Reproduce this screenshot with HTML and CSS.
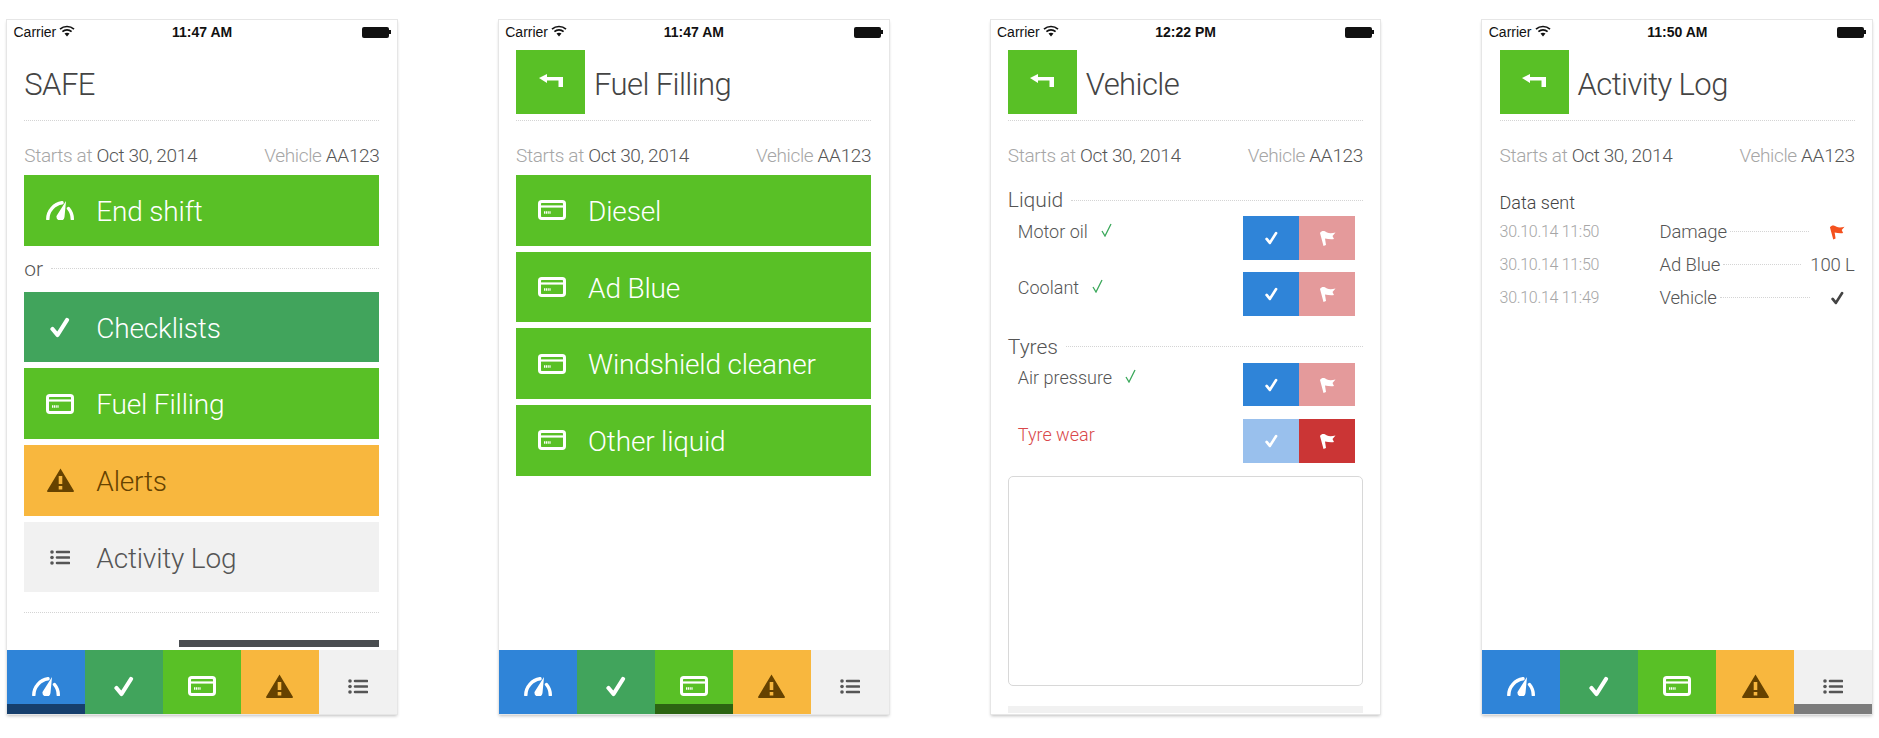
FILE: index.html
```html
<!DOCTYPE html>
<html lang="en">
<head>
    <meta charset="UTF-8">
    <title>SAFE screens</title>
    <link rel="stylesheet" href="styles.css">
</head>
<body>
    <!-- Shared icons -->
    <svg class="sprite" width="0" height="0">
        <symbol id="i-gauge" viewBox="0 0 28 19">
            <path d="M1.800 18C1.800 10 8 3 16 1.800" fill="none" stroke="currentColor" stroke-width="3.400" stroke-linecap="round"/>
            <path d="M10.500 15L20 0L18.500 16A4 4 0 0 1 10.500 15Z" fill="currentColor"/>
            <path d="M22.500 7.500C25 10.500 26.300 14 26.300 18" fill="none" stroke="currentColor" stroke-width="3.400" stroke-linecap="round"/>
        </symbol>
        <symbol id="i-check" viewBox="0 0 20 21">
            <path d="M2.500 12L7.500 18L17 3" fill="none" stroke="currentColor" stroke-width="4.200" stroke-linecap="round" stroke-linejoin="round"/>
        </symbol>
        <symbol id="i-card" viewBox="0 0 28 20">
            <rect x="1.500" y="1.500" width="25" height="17" rx="2.200" fill="none" stroke="currentColor" stroke-width="3"/>
            <path d="M1 6.500H27" stroke="currentColor" stroke-width="2.200"/>
            <path d="M6 12.500H13" stroke="currentColor" stroke-width="2.400" stroke-dasharray="1.200 .6"/>
        </symbol>
        <symbol id="i-warn" viewBox="0 0 27 24">
            <path fill-rule="evenodd" fill="currentColor" d="M13.500 0.500L27 23Q27 24 26 24H1Q0 24 0 23ZM11.700 8V16H15.300V8ZM11.700 18V21.500H15.300V18Z"/>
        </symbol>
        <symbol id="i-list" viewBox="0 0 20 15">
            <circle cx="2" cy="2" r="1.800" fill="currentColor"/>
            <circle cx="2" cy="7.500" r="1.800" fill="currentColor"/>
            <circle cx="2" cy="13" r="1.800" fill="currentColor"/>
            <path d="M7 2H19M7 7.500H19M7 13H19" stroke="currentColor" stroke-width="2.600" stroke-linecap="round"/>
        </symbol>
        <symbol id="i-back" viewBox="0 0 24 13">
            <path fill="currentColor" d="M0 4L8 0V3H24V13H19.500V6.500H8V9Z"/>
        </symbol>
        <symbol id="i-flag" viewBox="0 0 17 16">
            <path fill="currentColor" d="M1 3C3 0 6 1 8 2.500C10 3.500 13 3.500 16.500 2.500L13.500 6L15 9C12 9.500 9 9 6 8.500L7 15L4.500 16Z"/>
        </symbol>
        <symbol id="i-thin" viewBox="0 0 11 14">
            <path d="M1 8L4 13L10 1" fill="none" stroke="currentColor" stroke-width="1.300"/>
        </symbol>
        <symbol id="i-wifi" viewBox="0 0 16 12">
            <path d="M1 4.200C5 0.600 11 0.600 15 4.200M3.400 6.600C6 4.300 10 4.300 12.600 6.600" fill="none" stroke="currentColor" stroke-width="1.700"/>
            <path d="M5.500 8.500C7 7.500 9 7.500 10.500 8.500L8 11.500Z" fill="currentColor"/>
        </symbol>
    </svg>

    <div class="phones">

        <!-- Home -->
        <section class="phone">
            <div class="status">
                <div class="carrier">Carrier <svg class="wifi"><use href="#i-wifi"/></svg></div>
                <div class="time">11:47 AM</div>
                <div class="battery"><span class="battery-body"></span><span class="battery-tip"></span></div>
            </div>
            <div class="screen">
                <div class="head"><h1 class="title">SAFE</h1></div>
                <div class="meta">
                    <span><span class="muted">Starts at</span> Oct 30, 2014</span>
                    <span><span class="muted">Vehicle</span> AA123</span>
                </div>
                <div class="btn-list">
                    <a class="btn green"><span class="btn-icon"><svg class="ico-gauge"><use href="#i-gauge"/></svg></span>End shift</a>
                    <div class="or"><span>or</span><i class="dots"></i></div>
                    <a class="btn teal"><span class="btn-icon"><svg class="ico-check"><use href="#i-check"/></svg></span>Checklists</a>
                    <a class="btn green"><span class="btn-icon"><svg class="ico-card"><use href="#i-card"/></svg></span>Fuel Filling</a>
                    <a class="btn orange"><span class="btn-icon"><svg class="ico-warn"><use href="#i-warn"/></svg></span>Alerts</a>
                    <a class="btn grey"><span class="btn-icon"><svg class="ico-list"><use href="#i-list"/></svg></span>Activity Log</a>
                </div>
                <div class="rule"></div>
                <div class="dark-bar"></div>
            </div>
            <nav class="tabs">
                <a class="tab blue on"><svg class="ico-gauge"><use href="#i-gauge"/></svg></a>
                <a class="tab teal"><svg class="ico-check"><use href="#i-check"/></svg></a>
                <a class="tab green"><svg class="ico-card"><use href="#i-card"/></svg></a>
                <a class="tab orange"><svg class="ico-warn"><use href="#i-warn"/></svg></a>
                <a class="tab grey"><svg class="ico-list"><use href="#i-list"/></svg></a>
            </nav>
        </section>

        <!-- Fuel Filling -->
        <section class="phone">
            <div class="status">
                <div class="carrier">Carrier <svg class="wifi"><use href="#i-wifi"/></svg></div>
                <div class="time">11:47 AM</div>
                <div class="battery"><span class="battery-body"></span><span class="battery-tip"></span></div>
            </div>
            <div class="screen">
                <div class="head">
                    <a class="back"><svg class="ico-back"><use href="#i-back"/></svg></a>
                    <h1 class="title">Fuel Filling</h1>
                </div>
                <div class="meta">
                    <span><span class="muted">Starts at</span> Oct 30, 2014</span>
                    <span><span class="muted">Vehicle</span> AA123</span>
                </div>
                <div class="btn-list">
                    <a class="btn green"><span class="btn-icon"><svg class="ico-card"><use href="#i-card"/></svg></span>Diesel</a>
                    <a class="btn green"><span class="btn-icon"><svg class="ico-card"><use href="#i-card"/></svg></span>Ad Blue</a>
                    <a class="btn green"><span class="btn-icon"><svg class="ico-card"><use href="#i-card"/></svg></span>Windshield cleaner</a>
                    <a class="btn green"><span class="btn-icon"><svg class="ico-card"><use href="#i-card"/></svg></span>Other liquid</a>
                </div>
            </div>
            <nav class="tabs">
                <a class="tab blue"><svg class="ico-gauge"><use href="#i-gauge"/></svg></a>
                <a class="tab teal"><svg class="ico-check"><use href="#i-check"/></svg></a>
                <a class="tab green on"><svg class="ico-card"><use href="#i-card"/></svg></a>
                <a class="tab orange"><svg class="ico-warn"><use href="#i-warn"/></svg></a>
                <a class="tab grey"><svg class="ico-list"><use href="#i-list"/></svg></a>
            </nav>
        </section>

        <!-- Vehicle checklist -->
        <section class="phone">
            <div class="status">
                <div class="carrier">Carrier <svg class="wifi"><use href="#i-wifi"/></svg></div>
                <div class="time">12:22 PM</div>
                <div class="battery"><span class="battery-body"></span><span class="battery-tip"></span></div>
            </div>
            <div class="screen">
                <div class="head">
                    <a class="back"><svg class="ico-back"><use href="#i-back"/></svg></a>
                    <h1 class="title">Vehicle</h1>
                </div>
                <div class="meta">
                    <span><span class="muted">Starts at</span> Oct 30, 2014</span>
                    <span><span class="muted">Vehicle</span> AA123</span>
                </div>

                <div class="group"><span>Liquid</span><i class="dots"></i></div>
                <div class="check-row">
                    <div class="check-name">Motor oil <svg class="ico-thin"><use href="#i-thin"/></svg></div>
                    <div class="toggle">
                        <a class="toggle-ok"><svg class="ico-tick"><use href="#i-check"/></svg></a>
                        <a class="toggle-flag"><svg class="ico-flag"><use href="#i-flag"/></svg></a>
                    </div>
                </div>
                <div class="check-row">
                    <div class="check-name">Coolant <svg class="ico-thin"><use href="#i-thin"/></svg></div>
                    <div class="toggle">
                        <a class="toggle-ok"><svg class="ico-tick"><use href="#i-check"/></svg></a>
                        <a class="toggle-flag"><svg class="ico-flag"><use href="#i-flag"/></svg></a>
                    </div>
                </div>

                <div class="group"><span>Tyres</span><i class="dots"></i></div>
                <div class="check-row">
                    <div class="check-name">Air pressure <svg class="ico-thin"><use href="#i-thin"/></svg></div>
                    <div class="toggle">
                        <a class="toggle-ok"><svg class="ico-tick"><use href="#i-check"/></svg></a>
                        <a class="toggle-flag"><svg class="ico-flag"><use href="#i-flag"/></svg></a>
                    </div>
                </div>
                <div class="check-row bad">
                    <div class="check-name">Tyre wear</div>
                    <div class="toggle">
                        <a class="toggle-ok"><svg class="ico-tick"><use href="#i-check"/></svg></a>
                        <a class="toggle-flag"><svg class="ico-flag"><use href="#i-flag"/></svg></a>
                    </div>
                </div>

                <div class="notes"></div>
                <div class="grey-bar"></div>
            </div>
        </section>

        <!-- Activity Log -->
        <section class="phone">
            <div class="status">
                <div class="carrier">Carrier <svg class="wifi"><use href="#i-wifi"/></svg></div>
                <div class="time">11:50 AM</div>
                <div class="battery"><span class="battery-body"></span><span class="battery-tip"></span></div>
            </div>
            <div class="screen">
                <div class="head">
                    <a class="back"><svg class="ico-back"><use href="#i-back"/></svg></a>
                    <h1 class="title">Activity Log</h1>
                </div>
                <div class="meta">
                    <span><span class="muted">Starts at</span> Oct 30, 2014</span>
                    <span><span class="muted">Vehicle</span> AA123</span>
                </div>
                <div class="log-title">Data sent</div>
                <div class="log-row">
                    <span class="log-date">30.10.14 11:50</span>
                    <span>Damage</span><i class="dots"></i>
                    <svg class="ico-log-flag"><use href="#i-flag"/></svg>
                </div>
                <div class="log-row">
                    <span class="log-date">30.10.14 11:50</span>
                    <span>Ad Blue</span><i class="dots"></i>
                    <span class="log-value">100 L</span>
                </div>
                <div class="log-row">
                    <span class="log-date">30.10.14 11:49</span>
                    <span>Vehicle</span><i class="dots"></i>
                    <svg class="ico-log-check"><use href="#i-check"/></svg>
                </div>
            </div>
            <nav class="tabs">
                <a class="tab blue"><svg class="ico-gauge"><use href="#i-gauge"/></svg></a>
                <a class="tab teal"><svg class="ico-check"><use href="#i-check"/></svg></a>
                <a class="tab green"><svg class="ico-card"><use href="#i-card"/></svg></a>
                <a class="tab orange"><svg class="ico-warn"><use href="#i-warn"/></svg></a>
                <a class="tab grey on"><svg class="ico-list"><use href="#i-list"/></svg></a>
            </nav>
        </section>

    </div>
</body>
</html>
```

FILE: styles.css
```css
* {
    box-sizing: border-box;
}
html, body {
    margin: 0;
    height: 738px;
    overflow: hidden;
    background: #fff;
}
body {
    font-family: Roboto, "Liberation Sans", sans-serif;
    font-weight: 300;
    color: #555;
}
.sprite {
    display: block;
}
.phones {
    display: flex;
    gap: 102px;
    padding: 20px 7px 0;
}
.phone {
    width: 390px;
    height: 694px;
    display: flex;
    flex-direction: column;
    background: #fff;
    box-shadow: 0 0 0 1px #e6e6e6, 0 2px 3px rgba(0, 0, 0, .25);
}

/* status bar */
.status {
    height: 30px;
    flex: none;
    display: grid;
    grid-template-columns: 1fr auto 1fr;
    align-items: center;
    padding: 0 6px 6px 6.500px;
    font-family: "Liberation Sans", Arial, sans-serif;
    font-size: 14px;
    font-weight: 400;
    color: #111;
}
.carrier {
    display: flex;
    align-items: center;
    gap: 3px;
}
.wifi {
    width: 16px;
    height: 12px;
    margin-top: -3px;
}
.time {
    font-weight: 700;
}
.battery {
    display: flex;
    align-items: center;
    justify-content: flex-end;
}
.battery-body {
    width: 27px;
    height: 11px;
    background: #111;
    border-radius: 2px;
}
.battery-tip {
    width: 2px;
    height: 4px;
    background: #111;
}

/* screen */
.screen {
    flex: 1;
    min-height: 0;
    padding: 0 17.330px;
    overflow: hidden;
}
.head {
    display: flex;
    align-items: center;
    gap: 9px;
    height: 71px;
    padding-bottom: 6px;
    border-bottom: 1px dotted #d4d4d4;
}
.title {
    margin: 0;
    padding-top: 4px;
    font-size: 31px;
    font-weight: 300;
    letter-spacing: -.6px;
    color: #444;
}
.back {
    width: 69px;
    height: 64px;
    display: flex;
    align-items: center;
    justify-content: center;
    background: #59c026;
    color: #fff;
}
.ico-back {
    width: 24px;
    height: 13px;
    margin-top: -4px;
}
.meta {
    display: flex;
    justify-content: space-between;
    align-items: center;
    height: 24px;
    margin-top: 22px;
    font-size: 19px;
    letter-spacing: -.36px;
    color: #555;
}
.muted {
    color: #a6a6a6;
}
.dots {
    flex: 1;
    border-bottom: 1px dotted #d4d4d4;
}

/* big buttons */
.btn-list {
    display: flex;
    flex-direction: column;
    gap: 6px;
    margin-top: 8px;
}
.btn {
    height: 70.700px;
    display: flex;
    align-items: center;
    padding-top: 2px;
    font-size: 28px;
    letter-spacing: -.18px;
}
.btn-icon {
    width: 72px;
    margin-top: -2px;
    display: flex;
    justify-content: center;
    flex: none;
}
.green {
    background: #59c026;
    color: #fff;
}
.teal {
    background: #41a45c;
    color: #fff;
}
.orange {
    background: #f8b73e;
    color: #664200;
}
.grey {
    background: #f1f1f1;
    color: #555;
}
.blue {
    background: #2f84d8;
    color: #fff;
}
.or {
    display: flex;
    align-items: center;
    gap: 8px;
    height: 34px;
    font-size: 21px;
}
.rule {
    margin-top: 20px;
    border-bottom: 1px dotted #d4d4d4;
}
.dark-bar {
    width: 200px;
    height: 7px;
    margin: 27px 0 0 auto;
    background: #4a4d50;
}

/* icon sizes */
.ico-gauge {
    width: 28px;
    height: 19px;
}
.ico-check {
    width: 20px;
    height: 21px;
}
.ico-card {
    width: 28px;
    height: 20px;
}
.ico-warn {
    width: 27px;
    height: 24px;
}
.ico-list {
    width: 20px;
    height: 15px;
}

/* tab bar */
.tabs {
    flex: none;
    height: 64px;
    display: flex;
}
.tab {
    flex: 1;
    display: flex;
    align-items: center;
    justify-content: center;
    padding-top: 8px;
}
.tab.blue.on {
    box-shadow: inset 0 -10px 0 #163f6d;
}
.tab.green.on {
    box-shadow: inset 0 -10px 0 #2c6412;
}
.tab.grey.on {
    box-shadow: inset 0 -10px 0 #7c7c7c;
}

/* checklist */
.group {
    display: flex;
    align-items: center;
    gap: 8px;
    height: 26px;
    margin-top: 20px;
    font-size: 21px;
}
.check-row + .group {
    margin-top: 17.500px;
}
.check-row {
    display: flex;
    justify-content: space-between;
    height: 43.700px;
    margin-top: 12.800px;
    padding: 0 7.670px 0 10px;
}
.group + .check-row {
    margin-top: 3px;
}
.check-name {
    display: flex;
    align-items: center;
    gap: 13px;
    height: 30px;
    font-size: 18px;
}
.ico-thin {
    width: 11px;
    height: 14px;
    margin-top: -3px;
    color: #3aa85a;
}
.toggle {
    display: flex;
}
.toggle-ok, .toggle-flag {
    width: 56px;
    display: flex;
    align-items: center;
    justify-content: center;
    color: #fff;
}
.toggle-ok {
    background: #2f84d8;
}
.toggle-flag {
    background: #e49a9b;
}
.ico-tick {
    width: 13px;
    height: 14px;
}
.ico-flag {
    width: 17px;
    height: 16px;
}
.bad .check-name {
    color: #d9484a;
}
.bad .toggle-ok {
    background: #99c0ed;
}
.bad .toggle-flag {
    background: #cb3535;
}
.notes {
    height: 210px;
    margin-top: 13px;
    border: 1px solid #d8d8d8;
    border-radius: 5px;
}
.grey-bar {
    height: 7px;
    margin-top: 20px;
    background: #f1f1f1;
}

/* activity log */
.log-title {
    height: 24px;
    margin-top: 24px;
    font-size: 18px;
    line-height: 24px;
    color: #444;
}
.log-row {
    display: flex;
    align-items: center;
    height: 33px;
    font-size: 18.500px;
    letter-spacing: -.15px;
}
.log-date {
    width: 160px;
    flex: none;
    font-size: 16px;
    letter-spacing: -.3px;
    color: #a6a6a6;
}
.log-row .dots {
    margin-left: 3px;
}
.log-value {
    margin-left: 9px;
}
.ico-log-flag {
    width: 16px;
    height: 16px;
    margin: 0 10px 0 20px;
    color: #f4511e;
}
.ico-log-check {
    width: 13px;
    height: 14px;
    margin: 0 11px 0 21px;
    color: #444;
}
```
